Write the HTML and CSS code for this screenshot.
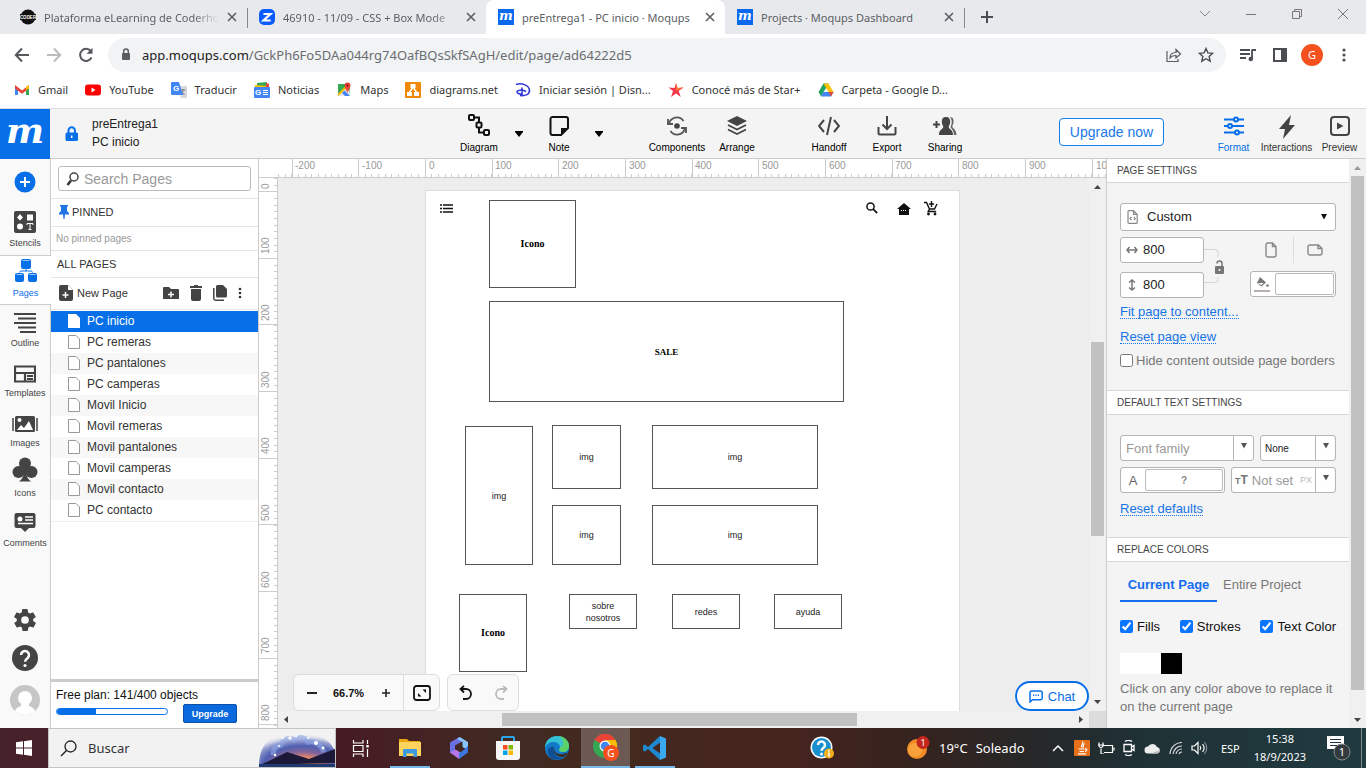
FILE: index.html
```html
<!DOCTYPE html>
<html lang="en">
<head>
<meta charset="utf-8">
<title>preEntrega1 - PC inicio · Moqups</title>
<link rel="stylesheet" href="styles.css">
</head>
<body>
<svg width="0" height="0" class="defs" aria-hidden="true">
  <symbol id="x" viewBox="0 0 10 10"><path d="M1 1l8 8M9 1l-8 8" stroke="currentColor" stroke-width="1.6" fill="none"/></symbol>
  <symbol id="sheet" viewBox="0 0 14 16"><path d="M1.500 1.500h7.500l3.500 3.500v9.500h-11z" fill="#fff" stroke="#999" stroke-width="1"/></symbol>
  <symbol id="down" viewBox="0 0 8 6"><path d="M0 0h8v1L4 6 0 1z" fill="currentColor"/></symbol>
</svg>

<nav class="tabs" aria-label="Browser tabs">
  <div class="tab">
    <svg class="i16" viewBox="0 0 16 16"><circle cx="8" cy="8" r="7.500" fill="#111"/><rect x="0" y="5" width="16" height="6" fill="#111"/><text x="8" y="9.800" font-size="4.500" font-weight="700" text-anchor="middle" fill="#fff" font-family="Liberation Sans">CODER</text></svg>
    <span class="tab-title fade">Plataforma eLearning de Coderho</span>
    <button class="tab-x" aria-label="Close"><svg width="10" height="10"><use href="#x"/></svg></button>
  </div>
  <div class="tab sep">
    <svg class="i16" viewBox="0 0 16 16"><rect width="16" height="16" rx="5" fill="#0b5cff"/><path d="M4.500 5h7l-7 6.500h7.200" fill="none" stroke="#fff" stroke-width="2.200"/></svg>
    <span class="tab-title fade">46910 - 11/09 - CSS + Box Mode</span>
    <button class="tab-x" aria-label="Close"><svg width="10" height="10"><use href="#x"/></svg></button>
  </div>
  <div class="tab active">
    <span class="fav">m</span>
    <span class="tab-title">preEntrega1 - PC inicio · Moqups</span>
    <button class="tab-x" aria-label="Close"><svg width="10" height="10"><use href="#x"/></svg></button>
  </div>
  <div class="tab">
    <span class="fav">m</span>
    <span class="tab-title">Projects · Moqups Dashboard</span>
    <button class="tab-x" aria-label="Close"><svg width="10" height="10"><use href="#x"/></svg></button>
  </div>
  <button class="new-tab sep" aria-label="New tab"><svg width="12" height="12"><path d="M6 0v12M0 6h12" stroke="#4a4d51" stroke-width="2"/></svg></button>
  <div class="win">
    <button aria-label="Search tabs"><svg width="12" height="8"><path d="M1 1l5 5 5-5" fill="none" stroke="#888"/></svg></button>
    <button aria-label="Minimize"><svg width="10" height="10"><path d="M0 5.500h10" stroke="#777"/></svg></button>
    <button aria-label="Restore"><svg width="10" height="10"><path d="M.5 2.500h7v7h-7zM2.500 2.500v-2h7v7h-2" fill="none" stroke="#777"/></svg></button>
    <button aria-label="Close window"><svg width="10" height="10"><path d="M0 0l10 10M10 0L0 10" stroke="#777"/></svg></button>
  </div>
</nav>

<div class="toolbar">
  <button class="nav-btn" aria-label="Back"><svg width="16" height="16"><path d="M8 1.500L1.800 8 8 14.500M2 8h13" fill="none" stroke="#55585c" stroke-width="2"/></svg></button>
  <button class="nav-btn" aria-label="Forward"><svg width="16" height="16"><path d="M8 1.500L14.200 8 8 14.500M14 8H1" fill="none" stroke="#bbbcbe" stroke-width="2"/></svg></button>
  <button class="nav-btn" aria-label="Reload"><svg width="16" height="16"><path d="M13.500 10.500a6 6 0 1 1-.8-6.500" fill="none" stroke="#55585c" stroke-width="2"/><path d="M14.500.8v6h-6z" fill="#55585c"/></svg></button>
  <div class="omnibox">
    <svg width="10" height="14" class="lock"><rect x="1" y="5" width="8" height="7" rx="1" fill="#5a5d61"/><path d="M2.700 5V3.300a2.300 2.300 0 0 1 4.600 0V5" fill="none" stroke="#5a5d61" stroke-width="1.500"/></svg>
    <span class="url"><b>app.moqups.com</b>/GckPh6Fo5DAa044rg74OafBQsSkfSAgH/edit/page/ad64222d5</span>
    <button aria-label="Share"><svg width="16" height="16"><path d="M1 4v10.500h11V12M4 11c0-4 2.500-5.500 6-5.500V2.500L14.500 7 10 11V8.500C7 8.500 5.500 9 4 11z" fill="none" stroke="#5a5d61" stroke-width="1.200"/></svg></button>
    <button aria-label="Bookmark"><svg width="16" height="16"><path d="M8 1.500l1.900 4.400 4.800.4-3.600 3.200 1.100 4.700L8 11.700l-4.200 2.500 1.100-4.700L1.300 6.300l4.800-.4z" fill="none" stroke="#4a4d51" stroke-width="1.400"/></svg></button>
  </div>
  <button class="tb" aria-label="Media"><svg width="16" height="16"><path d="M0 3h10M0 7h10M0 11h6M12 2.500v9M12 3h4" stroke="#4a4d51" stroke-width="1.800"/><circle cx="10.800" cy="12" r="2.300" fill="#4a4d51"/></svg></button>
  <button class="tb" aria-label="Side panel"><svg width="14" height="14"><rect x="1" y="1" width="12" height="12" fill="#fff" stroke="#4a4d51" stroke-width="2"/><path d="M8 1h5v12H8z" fill="#4a4d51"/></svg></button>
  <button class="tb" aria-label="Profile"><span class="avatar">G</span></button>
  <button class="tb" aria-label="Menu"><svg width="4" height="14"><g fill="#4a4d51"><circle cx="2" cy="2" r="1.600"/><circle cx="2" cy="7" r="1.600"/><circle cx="2" cy="12" r="1.600"/></g></svg></button>
</div>

<nav class="bookmarks" aria-label="Bookmarks">
  <a href="#"><svg class="i16" viewBox="0 0 16 16"><path d="M1 4v9h3V7z" fill="#4285f4"/><path d="M15 4v9h-3V7z" fill="#34a853"/><path d="M1 3l7 5.500L15 3v3.500l-7 5.300L1 6.500z" fill="#ea4335"/><path d="M12 5l3-2v3.500l-3 2z" fill="#fbbc04"/></svg>Gmail</a>
  <a href="#"><svg class="i16" viewBox="0 0 16 16"><rect y="2.500" width="16" height="11" rx="3" fill="#f00"/><path d="M6.500 5.500v5l4-2.500z" fill="#fff"/></svg>YouTube</a>
  <a href="#"><svg class="i16" viewBox="0 0 16 16"><path d="M7 4h8a1 1 0 0 1 1 1v10a1 1 0 0 1-1 1h-5z" fill="#d5d8dc"/><path d="M9.500 8h5M12 7v1c0 2-1 4-2 4.500M10.500 9.500l3 3.500" stroke="#777" fill="none"/><path d="M1 0h7l4 13H1a1 1 0 0 1-1-1V1a1 1 0 0 1 1-1z" fill="#4285f4"/><text x="2" y="9" font-size="8" font-weight="700" fill="#fff" font-family="Liberation Sans">G</text></svg>Traducir</a>
  <a href="#"><svg class="i16" viewBox="0 0 16 16"><path d="M3 1l10-1v6H3z" fill="#34a853"/><path d="M1 3l13 1v4H1z" fill="#fbbc04"/><path d="M12 1l3 1v4h-3z" fill="#ea4335"/><rect y="5" width="16" height="11" rx="1" fill="#4285f4"/><text x="1" y="13" font-size="8" font-weight="700" fill="#fff" font-family="Liberation Sans">G</text><path d="M9 8.500h5M9 10.500h5M9 12.500h5" stroke="#fff"/></svg>Noticias</a>
  <a href="#"><svg class="i16" viewBox="0 0 16 16"><path d="M2 2h12v12H2z" fill="#34a853"/><path d="M2 14L13 3l1 11z" fill="#e8eaed"/><path d="M2 13L13 2" stroke="#fbbc04" stroke-width="2"/><path d="M9 14l-3-3 2.500-2.500L14 14z" fill="#4285f4"/><path d="M11.500 11C11 8 8.500 6.500 8.500 3.500a3 3 0 0 1 6 0c0 3-2.500 4.500-3 7.500z" fill="#ea4335"/><circle cx="11.500" cy="3.500" r="1" fill="#7b1f16"/></svg>Maps</a>
  <a href="#"><svg class="i16" viewBox="0 0 16 16"><rect width="16" height="16" rx="1" fill="#f08705"/><path d="M8 5l-4 6M8 5l4 6" stroke="#fff" stroke-width="1.500"/><path d="M5.500 2h5v4h-5zM2 10h5v4H2zM9 10h5v4H9z" fill="#fff"/></svg>diagrams.net</a>
  <a href="#"><svg class="i16" viewBox="0 0 16 16"><path d="M1 2.500c6-2 13.500 1 13.500 6 0 4.500-5 5.500-9.500 5M7 5.500v8.500M7 12C4 12.500 2 11 2 9.800 2 8 8 7.500 11 9.500" fill="none" stroke="#3038d8" stroke-width="1.600"/></svg>Iniciar sesión | Disn...</a>
  <a href="#"><svg class="i16" viewBox="0 0 16 16"><path d="M8 1l1.500 5 6-.5-4.800 3.500 2 6L8 11.500 3 15l2-6L.5 5.500 6.500 6z" fill="#f4364c"/><path d="M8 1l1.500 5 6-.5L8 9z" fill="#fb7a2c"/></svg>Conocé más de Star+</a>
  <a href="#"><svg class="i16" viewBox="0 0 16 16"><path d="M5.500 1.500h5L8 6l-5 8.500L.5 10z" fill="#1fa463"/><path d="M5.500 1.500h5l5 8.500h-5z" fill="#ffc107"/><path d="M5.500 10h10L13 14.500H3z" fill="#4285f4"/><path d="M10.500 10h5L13 14.500z" fill="#ea4335"/></svg>Carpeta - Google D...</a>
</nav>

<header class="app-head">
  <div class="logo">m</div>
  <div class="doc">
    <svg width="14" height="16"><rect x=".5" y="6.500" width="12.500" height="8.500" rx="1.500" fill="#0770e8"/><path d="M3.500 7V4.500a3.200 3.200 0 0 1 6.400 0V7" fill="none" stroke="#0770e8" stroke-width="2"/><path d="M6.700 9.500v2.500" stroke="#fff" stroke-width="1.500"/></svg>
    <p>preEntrega1<br>PC inicio</p>
  </div>
  <div class="group">
    <button class="tool"><svg width="22" height="22" fill="none" stroke="#111" stroke-width="2"><rect x="1" y="1" width="5" height="5" rx="1"/><rect x="8.500" y="8.500" width="5" height="5" rx="1"/><rect x="16" y="16" width="5" height="5" rx="1"/><path d="M6 3.500h5v5M11 13.500v5h5"/></svg>Diagram</button>
    <button class="caret" aria-label="Diagram options"><svg width="8" height="6"><use href="#down"/></svg></button>
    <button class="tool"><svg width="20" height="20"><path d="M1.500 3a2 2 0 0 1 2-2H17a2 2 0 0 1 2 2v9l-7 7H3.500a2 2 0 0 1-2-2z" fill="none" stroke="#111" stroke-width="2"/><path d="M12 19v-7h7z" fill="#111"/></svg>Note</button>
    <button class="caret" aria-label="Note options"><svg width="8" height="6"><use href="#down"/></svg></button>
  </div>
  <div class="group">
    <button class="tool"><svg width="20" height="20" fill="none" stroke="#555" stroke-width="1.800"><path d="M2 8A8 8 0 0 1 16.500 5M18 12A8 8 0 0 1 3.500 15"/><path d="M1 3v5h5M19 17v-5h-5"/><circle cx="10" cy="10" r="2.800" fill="#444" stroke="none"/></svg>Components</button>
    <button class="tool"><svg width="20" height="20"><path d="M10 0l10 5-10 5L0 5z" fill="#444"/><path d="M1 9l9 4.500L19 9M1 13.500l9 4.500 9-4.500" fill="none" stroke="#444" stroke-width="1.800"/></svg>Arrange</button>
  </div>
  <div class="group share">
    <button class="tool"><svg width="22" height="20" fill="none" stroke="#444" stroke-width="2"><path d="M6 4L1 10l5 6M16 4l5 6-5 6M13 1L9 19"/></svg>Handoff</button>
    <button class="tool"><svg width="20" height="20" fill="none" stroke="#444" stroke-width="2"><path d="M10 0v13M5.500 8.500L10 13l4.500-4.500M1.500 11v6a1.500 1.500 0 0 0 1.500 1.500h14a1.500 1.500 0 0 0 1.500-1.500v-6"/></svg>Export</button>
    <button class="tool"><svg width="24" height="20"><path d="M3.500 5v7M0 8.500h7" stroke="#444" stroke-width="2"/><path d="M13 1c3 0 4.200 2 4.200 4.500 0 2-.8 4-1.500 5 0 3 4.300 2.500 4.300 8.500H6c0-6 4.300-5.500 4.300-8.500-.7-1-1.500-3-1.500-5C8.800 3 10 1 13 1z" fill="#444"/><path d="M17 1c3 .2 4 2.500 3.500 5.500-.3 2-1 2.500-1.200 4 .3 2.200 4 2.500 4.200 8.500H21c-.2-5-2.500-5.500-3.500-8C19 8 19.500 4 17 1z" fill="#666"/></svg>Sharing</button>
  </div>
  <button class="upgrade-now">Upgrade now</button>
  <div class="group right">
    <button class="tool blue"><svg width="20" height="20" fill="#f4f4f4" stroke="#0770e8" stroke-width="2"><path d="M0 3.500h20M0 10h20M0 16.500h20"/><circle cx="12" cy="3.500" r="2"/><circle cx="6" cy="10" r="2"/><circle cx="13" cy="16.500" r="2"/></svg>Format</button>
    <button class="tool"><svg width="16" height="24"><path d="M12 0L0 14h6L4 24l12-14h-6z" fill="#444"/></svg>Interactions</button>
    <button class="tool"><svg width="20" height="20"><rect x="1" y="1" width="18" height="18" rx="3" fill="none" stroke="#444" stroke-width="2"/><path d="M7 6.500v7l6.500-3.500z" fill="#444"/></svg>Preview</button>
  </div>
</header>

<main class="app">
  <nav class="rail" aria-label="Tools">
    <button class="add" aria-label="Add"><svg width="22" height="22"><circle cx="11" cy="11" r="10.500" fill="#0770e8"/><path d="M11 6v10M6 11h10" stroke="#fff" stroke-width="2"/></svg></button>
    <button class="rail-item"><svg width="22" height="22"><rect width="22" height="22" rx="2" fill="#444"/><path d="M6 3l3 3.500L6 9.500 3 6.500zM13 3.500h6v6h-6z" fill="#fff"/><circle cx="6" cy="15.500" r="3" fill="#fff"/><path d="M13 14v-1.500h6V14M16 12.500v6M14.500 18.500h3" stroke="#fff" fill="none"/></svg>Stencils</button>
    <button class="rail-item on"><svg width="22" height="24" fill="#0770e8"><rect x="6" y="0" width="10" height="10" rx="2"/><rect x="0" y="14" width="9" height="9" rx="2"/><rect x="13" y="14" width="9" height="9" rx="2"/><path d="M11 10v2M4.500 13.500l1-1.500h11l1 1.500" fill="none" stroke="#0770e8"/><path d="M7.500 1.500h7M1.500 15.500h6M14.500 15.500h6" stroke="#9cc8fa"/></svg>Pages</button>
    <button class="rail-item"><svg width="22" height="20"><path d="M0 1h22M4 5.500h18M0 10h22M4 14.500h18M6 19h16" stroke="#444" stroke-width="2"/></svg>Outline</button>
    <button class="rail-item"><svg width="22" height="18"><path d="M1 1.500h20v15H1zM1 8h20M11 8v9M13 11h6M13 14h6" fill="none" stroke="#444" stroke-width="2.200"/></svg>Templates</button>
    <button class="rail-item"><svg width="26" height="18"><rect x="3" y="1" width="20" height="16" rx="1.500" fill="#444"/><path d="M1 3v13M25 3v13" stroke="#444" stroke-width="1.500"/><path d="M5 15l4-5 3 3 5-7 4 9z" fill="#fff"/><circle cx="7.500" cy="5" r="2" fill="#fff"/></svg>Images</button>
    <button class="rail-item"><svg width="26" height="26" fill="#444"><circle cx="13" cy="6.500" r="6"/><circle cx="6.500" cy="15" r="6"/><circle cx="19.500" cy="15" r="6"/><path d="M10 8h6l2 8h-3.500c0 4 1.500 6 4.500 8.500H7c3-2.500 4.500-4.500 4.500-8.500H8z"/></svg>Icons</button>
    <button class="rail-item"><svg width="22" height="20"><path d="M2.500 0h17A2 2 0 0 1 21.500 2v11a2 2 0 0 1-2 2H15l-4 4-4-4H2.500a2 2 0 0 1-2-2V2a2 2 0 0 1 2-2z" fill="#444"/><circle cx="6" cy="6" r="2.500" fill="#fff"/><path d="M11 4h8M11 7h8M4 10.500h15" stroke="#fff" stroke-width="1.500"/></svg>Comments</button>
    <div class="rail-end">
      <button aria-label="Settings"><svg width="22" height="22" viewBox="2 2 20 20"><path fill="#444" d="M19.400 13a7.500 7.500 0 0 0 0-2l2.100-1.600a.5.500 0 0 0 .1-.6l-2-3.500a.5.500 0 0 0-.6-.2l-2.500 1a7.300 7.300 0 0 0-1.700-1l-.4-2.700a.5.500 0 0 0-.5-.4h-4a.5.500 0 0 0-.5.400l-.4 2.700a7.700 7.700 0 0 0-1.700 1l-2.500-1a.5.500 0 0 0-.6.200l-2 3.500a.5.500 0 0 0 .1.600L4.600 11a8 8 0 0 0 0 2l-2.100 1.600a.5.500 0 0 0-.1.600l2 3.500c.1.200.4.300.6.200l2.500-1c.5.400 1.100.7 1.700 1l.4 2.700c0 .2.200.4.500.4h4c.2 0 .5-.2.500-.4l.4-2.700a7.300 7.300 0 0 0 1.700-1l2.500 1c.2.100.5 0 .6-.2l2-3.500a.5.500 0 0 0-.1-.6zM12 15.500a3.500 3.500 0 1 1 0-7 3.500 3.500 0 0 1 0 7z"/></svg></button>
      <button aria-label="Help"><svg width="26" height="26"><circle cx="13" cy="13" r="13" fill="#444"/><path d="M9 10a4 4 0 1 1 6.500 3.200C14 14.300 13 15 13 16.800" fill="none" stroke="#fff" stroke-width="2.500"/><circle cx="13" cy="20.500" r="1.600" fill="#fff"/></svg></button>
      <button aria-label="Account"><svg width="30" height="30"><clipPath id="av"><circle cx="15" cy="15" r="15"/></clipPath><g clip-path="url(#av)"><rect width="30" height="30" fill="#c6c6c6"/><circle cx="15" cy="13" r="7" fill="#fff"/><path d="M11 17h8v4c4 1 7 4 7 9H4c0-5 3-8 7-9z" fill="#fff"/></g></svg></button>
    </div>
  </nav>

  <section class="pages">
    <div class="search-row"><label class="search"><svg width="13" height="14"><circle cx="8" cy="5" r="4" fill="none" stroke="#444" stroke-width="1.500"/><path d="M5 8.500L1.500 13" stroke="#333" stroke-width="2.500"/></svg><input type="text" placeholder="Search Pages" aria-label="Search Pages"></label></div>
    <h2 class="pin"><svg width="10" height="14"><path d="M1 0h8v1.500H8V6l2 2v1.500H6L5.500 14h-1L4 9.500H0V8l2-2V1.500H1z" fill="#1f74e6"/></svg>PINNED</h2>
    <p class="none">No pinned pages</p>
    <h2 class="all">ALL PAGES</h2>
    <div class="page-tools">
      <button class="new-page"><svg width="14" height="16"><path d="M2 0h7l5 5v9a2 2 0 0 1-2 2H2a2 2 0 0 1-2-2V2a2 2 0 0 1 2-2z" fill="#444"/><path d="M9 0v5h5" fill="#fff"/><path d="M6.500 7v6M3.500 10h6" stroke="#fff" stroke-width="1.500"/></svg>New Page</button>
      <button aria-label="New folder"><svg width="16" height="12"><path d="M1 0h5l2 2h7a1 1 0 0 1 1 1v9H0V1a1 1 0 0 1 1-1z" fill="#444"/><path d="M8 4.500v6M5 7.500h6" stroke="#fff" stroke-width="1.500"/></svg></button>
      <button aria-label="Delete"><svg width="12" height="16"><path d="M4 0h4v1h4v2H0V1h4zM1 4h10v10a2 2 0 0 1-2 2H3a2 2 0 0 1-2-2z" fill="#444"/></svg></button>
      <button aria-label="Duplicate"><svg width="14" height="16"><path d="M4.500 0H10l4 4v7a1.500 1.500 0 0 1-1.500 1.500h-8A1.500 1.500 0 0 1 3 11V1.500A1.500 1.500 0 0 1 4.500 0z" fill="#444"/><path d="M.8 3v10.500a1.700 1.700 0 0 0 1.700 1.700H11" fill="none" stroke="#444" stroke-width="1.500"/></svg></button>
      <button aria-label="More"><svg width="4" height="12" fill="#333"><circle cx="2" cy="2" r="1.300"/><circle cx="2" cy="6" r="1.300"/><circle cx="2" cy="10" r="1.300"/></svg></button>
    </div>
    <ul class="list">
      <li class="sel"><svg width="14" height="16"><path d="M1 1h8l4 4v10H1z" fill="#fff"/></svg>PC inicio</li>
      <li><svg width="14" height="16"><use href="#sheet"/></svg>PC remeras</li>
      <li><svg width="14" height="16"><use href="#sheet"/></svg>PC pantalones</li>
      <li><svg width="14" height="16"><use href="#sheet"/></svg>PC camperas</li>
      <li><svg width="14" height="16"><use href="#sheet"/></svg>Movil Inicio</li>
      <li><svg width="14" height="16"><use href="#sheet"/></svg>Movil remeras</li>
      <li><svg width="14" height="16"><use href="#sheet"/></svg>Movil pantalones</li>
      <li><svg width="14" height="16"><use href="#sheet"/></svg>Movil camperas</li>
      <li><svg width="14" height="16"><use href="#sheet"/></svg>Movil contacto</li>
      <li><svg width="14" height="16"><use href="#sheet"/></svg>PC contacto</li>
    </ul>
    <footer class="plan">
      <p>Free plan: 141/400 objects</p>
      <div class="plan-row"><div class="meter"><div style="width:35%"></div></div><button>Upgrade</button></div>
    </footer>
  </section>

  <section class="workspace">
    <div class="corner"></div>
    <div class="ruler-x"><svg width="100%" height="18" shape-rendering="crispEdges"><g stroke="#ccc" fill="none"><path d="M0 16.500h4000" stroke-width="4" stroke-dasharray="1 5.667"/><path d="M13.500 9h4000" stroke-width="18" stroke-dasharray="1 65.667"/></g><g class="num"><text x="17" y="10">-200</text><text x="84" y="10">-100</text><text x="151" y="10">0</text><text x="217" y="10">100</text><text x="284" y="10">200</text><text x="351" y="10">300</text><text x="417" y="10">400</text><text x="484" y="10">500</text><text x="551" y="10">600</text><text x="617" y="10">700</text><text x="684" y="10">800</text><text x="751" y="10">900</text><text x="818" y="10">1000</text></g></svg></div>
    <div class="ruler-y"><svg width="18" height="100%" shape-rendering="crispEdges"><g stroke="#ccc" fill="none"><path d="M16.500 0v4000" stroke-width="4" stroke-dasharray="1 5.667"/><path d="M9 13v4000" stroke-width="18" stroke-dasharray="1 65.667"/></g><g class="num"><text transform="translate(10 11)rotate(-90)">0</text><text transform="translate(10 76)rotate(-90)">100</text><text transform="translate(10 143)rotate(-90)">200</text><text transform="translate(10 210)rotate(-90)">300</text><text transform="translate(10 276)rotate(-90)">400</text><text transform="translate(10 343)rotate(-90)">500</text><text transform="translate(10 410)rotate(-90)">600</text><text transform="translate(10 476)rotate(-90)">700</text><text transform="translate(10 543)rotate(-90)">800</text></g></svg></div>
    <div class="stage">
      <div class="artboard">
        <svg class="g-list" width="13" height="9"><path d="M0 1h2M3 1h10M0 4.500h2M3 4.500h10M0 8h2M3 8h10" stroke="#111" stroke-width="1.600"/></svg>
        <svg class="g-search" width="12" height="12"><circle cx="4.500" cy="4.500" r="3.600" fill="none" stroke="#111" stroke-width="1.500"/><path d="M7.200 7.200l4 4" stroke="#111" stroke-width="1.700"/></svg>
        <svg class="g-home" width="14" height="12"><path d="M7 0l7 6h-2v6H2V6H0z" fill="#111"/><path d="M4 7.500h6" stroke="#fff" stroke-dasharray="1 1"/></svg>
        <svg class="g-cart" width="14" height="15" fill="none" stroke="#111" stroke-width="1.400"><path d="M0 1.500h2.500L5.500 8h5L13 3M5.500 8l-1.300 2.500h8M7.500 0v6M5 3h5"/><circle cx="4.500" cy="13" r=".7"/><circle cx="11" cy="13" r=".7"/></svg>
        <div class="node icon-top"><b>Icono</b></div>
        <div class="node sale"><b>SALE</b></div>
        <div class="node tall">img</div>
        <div class="node mid-a">img</div>
        <div class="node mid-b">img</div>
        <div class="node wide-a">img</div>
        <div class="node wide-b">img</div>
        <div class="node icon-foot"><b>Icono</b></div>
        <div class="node link-a">sobre<br>nosotros</div>
        <div class="node link-b">redes</div>
        <div class="node link-c">ayuda</div>
      </div>
      <div class="zoombar">
        <div class="pill">
          <button aria-label="Zoom out"><svg width="10" height="10"><path d="M0 5h10" stroke="#222" stroke-width="2"/></svg></button>
          <b>66.7%</b>
          <button aria-label="Zoom in"><svg width="8" height="8"><path d="M0 4h8M4 0v8" stroke="#222" stroke-width="1.600"/></svg></button>
          <button class="fit" aria-label="Fit"><svg width="18" height="16"><rect x="1" y="1" width="16" height="14" rx="2.500" fill="none" stroke="#111" stroke-width="1.800"/><path d="M9.500 4.500H13V8zM5 8v3.500h3.500z" fill="#111"/></svg></button>
        </div>
        <div class="pill hist">
          <button aria-label="Undo"><svg width="14" height="15" fill="none" stroke="#111" stroke-width="1.800"><path d="M5 .8L1.500 4 5 7.500M2 4h5a5 5 0 0 1 0 10H4"/></svg></button>
          <button aria-label="Redo"><svg width="14" height="15" fill="none" stroke="#bbb" stroke-width="1.800"><path d="M9 .8L12.500 4 9 7.500M12 4H7a5 5 0 0 0 0 10h3"/></svg></button>
        </div>
      </div>
      <button class="chat"><svg width="14" height="13" fill="none" stroke="#0770e8" stroke-width="1.500"><path d="M2.500 1h9a1.700 1.700 0 0 1 1.700 1.700V8A1.700 1.700 0 0 1 11.500 9.700H3.500L1 12V2.500A1.500 1.500 0 0 1 2.500 1z"/><path d="M4 5.300h7" stroke-dasharray="1.200 1.200"/></svg>Chat</button>
    </div>
    <div class="sb-y"><svg width="7" height="4"><path d="M0 4l3.500-4L7 4z" fill="#444"/></svg><i></i><svg width="7" height="4"><path d="M0 0h7L3.500 4z" fill="#444"/></svg></div>
    <div class="sb-x"><svg width="4" height="7"><path d="M4 0v7L0 3.500z" fill="#444"/></svg><i></i><svg width="4" height="7"><path d="M0 0v7l4-3.500z" fill="#444"/></svg></div>
    <div class="sb-corner"></div>
  </section>

  <aside class="side">
    <div class="props">
      <h3>PAGE SETTINGS</h3>
      <div class="sec size">
        <label class="field custom"><svg width="11" height="14" fill="none" stroke="#888" stroke-width="1.200"><path d="M1 1.700A1 1 0 0 1 2 .7h4.500l3.700 3.700v8a1 1 0 0 1-1 1H2a1 1 0 0 1-1-1zM6.500.7v3.700h3.700M4.500 7L3 8.700l1.500 1.500M6.800 7l1.500 1.700-1.500 1.500"/></svg><select aria-label="Page size"><option>Custom</option></select><svg width="6" height="6" class="dark"><path d="M0 0h6L3 5.500z" fill="#111"/></svg></label>
        <div class="dims">
          <div class="wh">
            <label class="field"><svg width="12" height="8" fill="none" stroke="#777" stroke-width="1.500"><path d="M3.500 1L1 4l2.500 3M8.500 1L11 4 8.500 7M1 4h10"/></svg><input type="text" value="800" aria-label="Width"></label>
            <label class="field"><svg width="12" height="12" fill="none" stroke="#777" stroke-width="1.500"><path d="M3 3.500L6 1l3 2.500M3 8.500L6 11l3-2.500M6 1v10"/></svg><input type="text" value="800" aria-label="Height"></label>
          </div>
          <svg class="chain" width="22" height="60"><path d="M0 12.500h11a3 3 0 0 1 3 3V20M0 45.500h11a3 3 0 0 0 3-3V40" fill="none" stroke="#d4d4d4"/><rect x="11" y="29" width="9" height="8" rx="1" fill="#777"/><path d="M13 26.500a2.500 2.500 0 0 1 5 0V29" fill="none" stroke="#777" stroke-width="1.500"/><path d="M15.500 32v2" stroke="#fff" stroke-width="1.500"/></svg>
          <div class="orient">
            <div class="orient-row"><button aria-label="Portrait"><svg width="12" height="16"><path d="M1 3a2 2 0 0 1 2-2h4.500L11 4.500V13a2 2 0 0 1-2 2H3a2 2 0 0 1-2-2zM7.500 1v3.500H11" fill="none" stroke="#888" stroke-width="1.400"/></svg></button><button aria-label="Landscape"><svg width="16" height="12"><path d="M1 3a2 2 0 0 1 2-2h8.500L15 4.500V9a2 2 0 0 1-2 2H3a2 2 0 0 1-2-2zM11 1v3.500h4" fill="none" stroke="#888" stroke-width="1.400"/></svg></button></div>
            <div class="field fill"><svg width="16" height="15"><path d="M6 0l6 5.500-4.500 4L3 6z" fill="#777"/><path d="M3.500 6h6L7.500 8z" fill="#fff"/><circle cx="13.500" cy="8.500" r="1.300" fill="#777"/><path d="M0 14h16" stroke="#b8b0b0" stroke-width="2"/></svg><button aria-label="Page color"></button></div>
          </div>
        </div>
        <p class="lnk"><a href="#">Fit page to content...</a></p>
        <p class="lnk"><a href="#">Reset page view</a></p>
        <label class="hide"><input type="checkbox">Hide content outside page borders</label>
      </div>
      <h3 class="mid">DEFAULT TEXT SETTINGS</h3>
      <div class="sec text">
        <div class="row"><div class="field font"><input type="text" placeholder="Font family" aria-label="Font family"><button aria-label="Fonts"><svg width="6" height="6"><path d="M0 0h6L3 5.500z" fill="#555"/></svg></button></div>
        <div class="field weight"><select aria-label="Weight"><option>None</option></select><button aria-label="Weights"><svg width="6" height="6"><path d="M0 0h6L3 5.500z" fill="#555"/></svg></button></div></div>
        <div class="row"><div class="field tcolor"><span>A</span><button aria-label="Text color">?</button></div>
        <div class="field fsize"><span class="tt"><small>T</small>T</span><input type="text" placeholder="Not set" aria-label="Font size"><em>PX</em><button aria-label="Sizes"><svg width="6" height="6"><path d="M0 0h6L3 5.500z" fill="#555"/></svg></button></div></div>
        <p class="lnk"><a href="#">Reset defaults</a></p>
      </div>
      <h3 class="mid">REPLACE COLORS</h3>
      <div class="sec colors">
        <div class="ctabs"><button class="cur">Current Page</button><button>Entire Project</button></div>
        <div class="checks"><label><input type="checkbox" checked>Fills</label><label><input type="checkbox" checked>Strokes</label><label><input type="checkbox" checked>Text Color</label></div>
        <div class="swatches"><button class="w" aria-label="White"></button><button class="k" aria-label="Black"></button></div>
        <p class="hint">Click on any color above to replace it on the current page</p>
      </div>
    </div>
    <div class="sb-side"><svg width="7" height="4"><path d="M0 4l3.500-4L7 4z" fill="#999"/></svg><i></i><svg width="7" height="4"><path d="M0 0h7L3.500 4z" fill="#444"/></svg></div>
  </aside>
</main>

<footer class="taskbar">
  <button class="start" aria-label="Start"><svg width="16" height="16" fill="#fff"><path d="M0 2.300l7-1v6.300H0zM8 1.200L16 0v7.600H8zM0 8.500h7v6.300l-7-1zM8 8.500h8V16l-8-1.200z"/></svg></button>
  <label class="wsearch"><svg width="17" height="17"><circle cx="10.500" cy="6.500" r="5.500" fill="none" stroke="#222" stroke-width="1.300"/><path d="M6.500 10.500L1 16" stroke="#222" stroke-width="1.500"/></svg><input type="text" placeholder="Buscar" aria-label="Buscar">
    <svg class="art" width="76" height="38" viewBox="0 0 76 38"><defs><radialGradient id="sky" cx=".58" cy=".9" r=".85"><stop offset="0" stop-color="#ff9a50"/><stop offset=".22" stop-color="#e08468"/><stop offset=".4" stop-color="#80649c"/><stop offset=".6" stop-color="#4e60b2"/><stop offset=".78" stop-color="#98a0d0"/><stop offset="1" stop-color="#f2f2f2" stop-opacity="0"/></radialGradient></defs><path d="M0 38C0 12 14 3 38 3c22 0 34 8 38 20v15z" fill="url(#sky)"/><path d="M14 26c0-6 3-9 8-10 2-6 8-8 13-5 5-4 12-3 14 2 7-2 13 3 16 10" fill="none" stroke="#8fa6e6" stroke-width="5" opacity=".6"/><g fill="#fff"><circle cx="24" cy="9" r="1"/><circle cx="31" cy="9" r="1.700"/><circle cx="49" cy="9" r="1"/><circle cx="57" cy="14" r="2"/><circle cx="64" cy="19" r="1.400"/><circle cx="20" cy="17" r="1"/><circle cx="37" cy="7" r="1.200"/><circle cx="16" cy="26" r="1.300"/></g><path d="M1 36l11-5 16-8 22 7 26-10v14z" fill="#1c1838"/><path d="M0 35h76v3H0z" fill="#1e3a70"/></svg></label>
  <button class="task" aria-label="Task view"><svg width="17" height="17" fill="none" stroke="#fff" stroke-width="1.200"><path d="M1.500 0v3h9.500V0M1.500 5.500H11v6H1.500zM1.500 17v-3H11v3M15.500 0v4M15.500 9v8"/><path d="M15.500 5v2.500" stroke-width="2.500"/></svg></button>
  <button class="task open" aria-label="Explorer"><svg width="22" height="20"><path d="M0 1h8l2 2h11v15H0z" fill="#e9a512"/><path d="M0 4h22v14H0z" fill="#ffd45e"/><path d="M4 19v-7a1 1 0 0 1 1-1h12a1 1 0 0 1 1 1v7h-3.500v-3.500h-7V19z" fill="#3c9be0"/></svg></button>
  <button class="task" aria-label="Microsoft 365"><svg width="20" height="22"><path d="M10.500 0L1 5.500v10l5 3V8.500l7.500-4.300V1.700z" fill="#6a6fe4"/><path d="M10.500 0L19 5v8l-5.500-3V5L8 2z" fill="#86c6fa"/><path d="M1 15.500l5.500-3 5 3 2.500-1.500L10 22z" fill="#b476ea"/><path d="M19 9v6.500L10 22v-6l3.500-2z" fill="#3a78e0"/></svg></button>
  <button class="task" aria-label="Store"><svg width="24" height="24"><path d="M6 5V2a1 1 0 0 1 1-1h10a1 1 0 0 1 1 1v3" fill="none" stroke="#2ba6ea" stroke-width="2"/><path d="M0 5h24v16a3 3 0 0 1-3 3H3a3 3 0 0 1-3-3z" fill="#f7f7f7"/><path d="M7 9h4.500v4.500H7z" fill="#f25022"/><path d="M12.500 9H17v4.500h-4.500z" fill="#7fba00"/><path d="M7 14.500h4.500V19H7z" fill="#00a4ef"/><path d="M12.500 14.500H17V19h-4.500z" fill="#ffb900"/></svg></button>
  <button class="task" aria-label="Edge"><svg width="24" height="24"><circle cx="12" cy="12" r="12" fill="#1279c9"/><path d="M0 12C0 5 5 0 12 0c7 0 12 4.500 12 10 0 4-3 6-6 6-2 0-4-1-4-2s1-1 1-3c0-3-3-5-7-5-4 0-7 3-8 6z" fill="#35c1d4"/><path d="M14 0c6 1 10 5 10 10 0 4-3 6-6 6-2 0-4-1-4-2 0-.8 1-1 1-3 5 0 4-8-1-11z" fill="#5bd36a"/><path d="M9 11c-2 6 3 11 9 11-5 3-13 2-15-5-1-5 3-7 6-6z" fill="#0c4f94"/><path d="M9 11c-.5 6 5 9 12 6 3-1 1 2-2 4-6 1-12-4-10-10z" fill="#3d2b25"/></svg></button>
  <button class="task open cur" aria-label="Chrome"><svg width="26" height="28"><circle cx="12" cy="12" r="12" fill="#34a853"/><path d="M12 12L1.500 6A12 12 0 0 1 22.500 6z" fill="#ea4335"/><path d="M12 6h10.500A12 12 0 0 1 12 24l5-9z" fill="#fbbc04"/><circle cx="12" cy="12" r="5.500" fill="#fff"/><circle cx="12" cy="12" r="4.300" fill="#4285f4"/><circle cx="18" cy="19" r="8" fill="#f4511e"/><text x="18" y="22.500" font-size="10" text-anchor="middle" fill="#fff" font-family="Noto Sans">G</text></svg></button>
  <button class="task open" aria-label="VS Code"><svg width="24" height="24"><path d="M17 0v24L5 13 2 15.500 0 14.500v-5l2-1 3 2.500zM17 6.500L9.500 12l7.500 5.500z" fill="#1f8ad2" fill-rule="evenodd"/><path d="M17 0l6 2.500v19L17 24z" fill="#3aa9f0"/></svg></button>
  <button class="whelp" aria-label="Help tips"><svg width="24" height="24"><circle cx="11.500" cy="11.500" r="11" fill="#fff"/><circle cx="11.500" cy="11.500" r="9.500" fill="#1a8fd0"/><path d="M8 9a3.500 3.500 0 1 1 5.500 2.800c-1.400 1-2 1.500-2 3" fill="none" stroke="#fff" stroke-width="2.500"/><circle cx="11.500" cy="18" r="1.500" fill="#fff"/><circle cx="19" cy="17.500" r="5" fill="#f2b01e"/><path d="M19 16.500v4M19 14v1.500" stroke="#fff" stroke-width="1.600"/></svg></button>
  <button class="weather"><svg width="24" height="24"><circle cx="10" cy="13" r="10" fill="#f08a24"/><circle cx="8" cy="14" r="7" fill="#f9a13a"/><circle cx="16" cy="6.500" r="6.500" fill="#c4261d"/><text x="16" y="10" font-size="9" text-anchor="middle" fill="#fff" font-family="Noto Sans">1</text></svg><span>19°C</span><span>Soleado</span></button>
  <div class="tray">
    <svg width="12" height="8" class="more"><path d="M1 7l5-5 5 5" fill="none" stroke="#fff" stroke-width="1.500"/></svg>
    <svg width="16" height="16"><rect width="16" height="16" rx="1" fill="#e8701a"/><path d="M8.500 1.500c2 2.500-2.500 3-.5 6M10.500 3.500C8.500 5 10 5.500 9 7.500M4.500 9h6M5.500 11.500h4.500M4 13.800h8M11 9c2.500-.5 2 2 0 2.500" fill="none" stroke="#fff" stroke-width="1.200"/></svg>
    <svg width="17" height="12" fill="none" stroke="#fff" stroke-width="1.200"><path d="M5 3.500h9.500v7H6M16 5.500v3M3 6.500V12h3M1 .5v3a2 2 0 0 0 4 0v-3M0 3h6"/></svg>
    <svg width="13" height="16" fill="none" stroke="#fff" stroke-width="1.300"><path d="M1 4.500h7.500v7H1zM8.500 7L11 5.500v5L8.500 9M2 1.500c2-1.200 5-1.200 7 0M2 14.500c2 1.200 5 1.200 7 0"/></svg>
    <svg width="17" height="11"><path d="M4 10.500a3.500 3.500 0 0 1 0-7A5 5 0 0 1 13 4a3.300 3.300 0 0 1 0 6.500z" fill="#eee"/><path d="M7 10.500L16 7a3 3 0 0 1-3 3.500z" fill="#bbb"/></svg>
    <svg width="14" height="14" fill="none" stroke="#ddd" stroke-width="1.200"><path d="M1 13A12 12 0 0 1 13 1.500M4 13a9 9 0 0 1 9-8M7 13a6 6 0 0 1 6-5M10 13a3 3 0 0 1 3-2"/></svg>
    <svg width="17" height="14" fill="none" stroke="#fff" stroke-width="1.200"><path d="M1 5h2.500L7 1.500v11L3.500 9H1z"/><path d="M9 5c1 1.300 1 2.700 0 4M11.500 3c2 2.500 2 5.500 0 8"/><path d="M13.500 1c3 4 3 8 0 12" stroke="#889"/></svg>
    <span class="lang">ESP</span>
    <time>15:38<br>18/9/2023</time>
    <svg width="26" height="26"><path d="M1 1h17v13h-4l-3 3v-3H1z" fill="#fff"/><path d="M4 4.500h11M4 7.500h11M4 10.500h7" stroke="#234"/><circle cx="16" cy="17" r="8" fill="#333b3e" stroke="#888"/><text x="16" y="21" font-size="11" text-anchor="middle" fill="#fff" font-family="Noto Sans">1</text></svg>
    <button class="desk" aria-label="Show desktop"></button>
  </div>
</footer>
</body>
</html>
```

FILE: styles.css
```css
* { box-sizing: border-box; }
html, body { height: 100%; margin: 0; }
body { display: flex; flex-direction: column; overflow: hidden; font-family: "Liberation Sans", Arial, sans-serif; font-size: 12px; color: #333; background: #fff; }
button { font: inherit; color: inherit; background: none; border: 0; padding: 0; margin: 0; display: flex; align-items: center; justify-content: center; }
input, select { font: inherit; color: inherit; border: 0; background: none; padding: 0; margin: 0; min-width: 0; outline: 0; appearance: none; }
p, h2, h3, ul { margin: 0; padding: 0; font-weight: 400; }
ul { list-style: none; }
svg { flex: none; display: block; }
.defs { position: absolute; }
.i16 { width: 16px; height: 16px; }

/* Browser chrome */
.tabs { display: flex; height: 34px; flex: none; background: #e8e9ed; padding-left: 8px; font: 11px "Noto Sans", sans-serif; color: #5b5e63; }
.tab { flex: 0 1 239px; display: flex; align-items: center; gap: 8px; padding: 0 10px 0 12px; min-width: 0; }
.tab.active { background: #fff; border-radius: 8px 8px 0 0; }
.tab-title { flex: 1; white-space: nowrap; overflow: hidden; }
.fade { mask-image: linear-gradient(to right, #000 85%, transparent); }
.tab-x { width: 10px; height: 10px; }
.sep { background: linear-gradient(#888, #888) 0 8px / 1px 20px no-repeat; }
.new-tab { width: 46px; }
.fav { width: 16px; height: 16px; background: #0b69ee; color: #fff; font: italic bold 13px/14px "DejaVu Serif", serif; text-align: center; }
.win { margin-left: auto; display: flex; height: 28px; }
.win button { width: 46px; }
.toolbar { display: flex; flex: none; align-items: center; height: 42px; padding: 0 6px; }
.nav-btn { width: 32px; }
.omnibox { flex: 1; display: flex; align-items: center; height: 34px; margin: 0 6px; padding: 0 4px 0 13px; border-radius: 17px; background: #f1f3f4; font: 13px "Noto Sans", sans-serif; color: #6a6d71; }
.omnibox button { width: 32px; }
.url { flex: 1; padding-left: 11px; white-space: nowrap; overflow: hidden; }
.url b { font-weight: 400; color: #222; }
.tb { width: 32px; }
.avatar { width: 22px; height: 22px; border-radius: 50%; background: #f4511e; color: #fff; font: 11px/22px "Noto Sans", sans-serif; }
.bookmarks { display: flex; flex: none; align-items: center; gap: 17px; height: 33px; padding: 0 14px 5px; border-bottom: 1px solid #dadbdd; font: 11px "Noto Sans", sans-serif; }
.bookmarks a { display: flex; align-items: center; gap: 8px; color: #333; text-decoration: none; white-space: nowrap; }

/* App header */
.app-head { display: flex; flex: none; align-items: center; height: 50px; background: #f4f4f4; border-bottom: 1px solid #ccc; font-size: 10px; color: #222; }
.logo { width: 50px; height: 50px; align-self: flex-start; background: #0770e8; color: #fff; font: italic bold 36px/42px "DejaVu Serif", serif; text-align: center; }
.doc { flex: 0 0 399px; display: flex; align-items: center; gap: 13px; padding: 0 0 2px 15px; font-size: 12px; line-height: 18px; }
.doc svg { margin-top: 2px; }
.group { display: flex; align-self: stretch; }
.group + .group { margin-left: 38px; }
.group + .share { margin-left: 33px; }
.tool { width: 60px; flex-direction: column; justify-content: flex-end; padding-bottom: 4px; line-height: 12px; color: #000; }
.tool svg { margin-bottom: 6px; }
.caret { width: 20px; color: #000; }
.share .tool { width: 58px; }
.right .tool { width: 53px; color: #333; }
.right .blue { color: #0770e8; }
.right .tool:nth-child(2) svg { margin-bottom: 3px; }
.upgrade-now { margin: 0 43px 0 auto; width: 105px; height: 28px; border: 1px solid #1080f0; border-radius: 4px; background: #fff; color: #1a78e8; font-size: 14px; margin-top: -3px; }

/* Rail */
.app { flex: 1; display: flex; min-height: 0; }
.rail { flex: 0 0 51px; display: flex; flex-direction: column; background: #f9f9f9; border-right: 1px solid #ccc; font-size: 9px; color: #444; }
.add { height: 46px; }
.rail-item { height: 50px; flex-direction: column; justify-content: flex-end; gap: 5px; padding-bottom: 7px; line-height: 10px; }
.rail-item.on { margin-right: -1px; background: #fff; border: solid #ccc; border-width: 1px 0; color: #0770e8; padding-bottom: 6px; }
.rail-end { margin-top: auto; display: flex; flex-direction: column; gap: 14px; padding-bottom: 13px; }

/* Pages panel */
.pages { flex: 0 0 208px; min-width: 0; display: flex; flex-direction: column; border-right: 1px solid #ccc; }
.search-row { padding: 7px; border-bottom: 1px solid #e4e4e4; }
.search { display: flex; align-items: center; gap: 5px; height: 25px; padding-left: 7px; border: 1px solid #bbb; border-radius: 3px; }
.search input { flex: 1; width: 0; font-size: 14px; }
::placeholder { color: #999; opacity: 1; }
.pages h2 { display: flex; align-items: center; height: 28px; padding-left: 6px; border-bottom: 1px solid #e4e4e4; font-size: 11px; }
.pages .all { height: 27px; }
.pages .pin { padding: 0 0 2px 8px; gap: 3px; }
.none { height: 24px; padding-left: 5px; border-bottom: 1px solid #e4e4e4; font-size: 10px; line-height: 24px; color: #999; }
.page-tools { display: flex; align-items: center; gap: 11px; height: 32px; padding: 0 16px 2px 8px; border-bottom: 1px solid #e4e4e4; font-size: 11px; }
.new-page { gap: 4px; margin-right: auto; }
.list { margin-top: 1px; border-bottom: 1px solid #eee; }
.list li { display: flex; align-items: center; gap: 6px; height: 21px; padding: 0 0 2px 16px; }
.list li:nth-child(odd) { background: #f7f7f7; }
.list .sel:nth-child(odd) { background: #0770e8; color: #fff; }
.plan { margin-top: auto; height: 49px; border-top: 3px solid #ccc; padding: 6px 5px 0; color: #111; }
.plan-row { display: flex; align-items: center; gap: 15px; }
.meter { width: 112px; height: 7px; border: 1px solid #0770e8; border-radius: 4px; overflow: hidden; margin-bottom: 2px; }
.meter div { height: 100%; background: #0770e8; }
.plan button { width: 54px; height: 19px; border: 1px solid #0a4fa8; border-radius: 2px; background: #0b69de; color: #fff; font-size: 9px; font-weight: 700; margin-top: 2px; }

/* Workspace */
.workspace { flex: 1; min-width: 0; display: grid; grid-template: 19px 1fr 17px / 19px 1fr 17px; background: #eee; }
.corner { background: #fff; border-bottom: 1px solid #ccc; }
.ruler-x { grid-column: 2 / 4; background: #fff; border-bottom: 1px solid #ccc; overflow: hidden; }
.ruler-y { grid-row: 2 / 4; background: #fff; border-right: 1px solid #ccc; overflow: hidden; min-height: 0; }
.ruler-y svg { height: 100%; }
.num { font-size: 10px; fill: #999; }
.stage { position: relative; overflow: hidden; background: #ededed; }
.artboard { position: absolute; left: 147px; top: 12px; width: 535px; bottom: 0; background: #fff; border: 1px solid #ddd; border-bottom: 0; font-size: 9px; line-height: 12px; color: #222; }
.artboard > * { position: absolute; }
.artboard b { font-family: "Liberation Serif", serif; font-size: 10px; color: #000; }
.artboard .sale b { font-size: 9px; }
.node { display: flex; align-items: center; justify-content: center; text-align: center; border: 1px solid #555; }
.g-list { left: 14px; top: 13px; }
.g-search { left: 440px; top: 11px; }
.g-home { left: 471px; top: 12px; }
.g-cart { left: 498px; top: 10px; }
.icon-top { left: 63px; top: 9px; width: 87px; height: 88px; }
.sale { left: 63px; top: 110px; width: 355px; height: 101px; }
.tall { left: 39px; top: 235px; width: 68px; height: 139px; }
.mid-a, .mid-b { left: 126px; width: 69px; }
.wide-a, .wide-b { left: 226px; width: 166px; }
.mid-a, .wide-a { top: 234px; height: 64px; }
.mid-b, .wide-b { top: 314px; height: 60px; }
.icon-foot { left: 33px; top: 403px; width: 68px; height: 78px; }
.link-a, .link-b, .link-c { top: 403px; width: 68px; height: 35px; }
.link-a { left: 143px; }
.link-b { left: 246px; }
.link-c { left: 348px; }
.zoombar { position: absolute; left: 15px; bottom: 0; display: flex; gap: 7px; }
.pill { display: flex; height: 37px; background: #f9f9f9; border: 1px solid #ddd; border-radius: 6px; align-items: center; font-size: 11px; color: #111; }
.pill button { width: 35px; height: 35px; }
.pill b { width: 39px; text-align: center; }
.pill .fit { width: 36px; border-left: 1px solid #ddd; }
.chat { position: absolute; right: 0; bottom: 0; width: 74px; height: 30px; gap: 5px; border: 2px solid #0770e8; border-radius: 15px; background: #fff; color: #0770e8; font-size: 13px; }
.sb-y, .sb-side { display: flex; flex-direction: column; align-items: center; background: #f0f0f0; }
.sb-y { padding: 7px 0; }
.sb-y i { width: 13px; flex: 194 0 0; background: #c1c1c1; }
.sb-y::before, .sb-y::after, .sb-x::before, .sb-x::after { content: ""; }
.sb-y svg:first-child, .sb-x svg:first-child { order: -2; }
.sb-y svg:last-child, .sb-x svg:last-child { order: 2; }
.sb-y::before { order: -1; flex: 152 0 0; }
.sb-y::after { order: 1; flex: 163 0 0; }
.sb-x { display: flex; align-items: center; padding: 0 6px; background: #f0f0f0; }
.sb-x i { height: 13px; flex: 355 0 0; background: #c1c1c1; }
.sb-x::before { order: -1; flex: 214 0 0; }
.sb-x::after { order: 1; flex: 222 0 0; }
.sb-corner { background: #dcdcdc; }

/* Properties */
.side { flex: 0 0 260px; min-width: 0; display: flex; border-left: 1px solid #ccc; background: #f4f4f4; }
.props { flex: 1 1 0; min-width: 0; overflow: hidden; font-size: 13px; }
.props h3 { height: 24px; padding-left: 10px; background: #fff; border-bottom: 1px solid #d8d8d8; font-size: 10px; line-height: 23px; color: #444; }
.props .mid { height: 25px; border-top: 1px solid #d8d8d8; }
.sec { padding: 0 13px; }
.size { padding-top: 20px; height: 207px; }
.field { display: flex; align-items: center; height: 26px; background: #fff; border: 1px solid #b5b5b5; border-radius: 3px; color: #222; }
.custom { height: 28px; padding: 0 8px 0 6px; gap: 9px; }
.custom select { flex: 1; color: #222; padding-bottom: 2px; }
.dims { display: flex; margin-top: 6px; }
.wh { width: 84px; }
.wh .field { gap: 5px; padding-left: 5px; }
.wh .field + .field { margin-top: 9px; }
.wh input { flex: 1; width: 0; padding-bottom: 2px; }
.orient { margin-left: auto; width: 86px; }
.orient-row { display: flex; height: 26px; margin: 0 0 8px; }
.orient-row button { flex: 1; }
.orient-row button + button { border-left: 1px solid #ddd; }
.fill { padding: 1px 1px 1px 3px; gap: 5px; }
.fill button { flex: 1; height: 22px; border: 1px solid #bbb; border-radius: 2px; }
.lnk { height: 25px; line-height: 17px; padding-top: 5px; }
.lnk a { color: #1473e6; text-decoration: none; border-bottom: 1px dotted #1473e6; line-height: 15px; display: inline-block; height: 15px; }
input[type=checkbox] { appearance: auto; width: 13px; height: 13px; margin: 0; accent-color: #0b75ff; }
.hide { display: flex; align-items: center; gap: 3px; margin-top: 5px; color: #777; white-space: nowrap; }
.text { padding-top: 20px; height: 122px; }
.text .lnk { padding-top: 1px; }
.row { display: flex; gap: 6px; margin-bottom: 6px; }
.row .field > button { align-self: stretch; width: 20px; border-left: 1px solid #b5b5b5; padding-bottom: 4px; }
.row .field input, .row .field select { flex: 1; width: 0; }
.font, .tcolor { flex: 1; min-width: 0; }
.font { padding-left: 5px; }
.weight { flex: 0 0 76px; padding-left: 4px; }
.weight select { font-size: 10px; }
.tcolor span { width: 24px; text-align: center; color: #666; }
.row .tcolor > button { flex: 1; align-self: center; height: 22px; margin-right: 1px; padding: 0; border: 1px solid #bbb; border-radius: 2px; font-size: 10px; font-weight: 700; color: #888; }
.fsize { flex: 0 0 105px; padding-left: 3px; }
.tt { font-size: 12px; font-weight: 700; color: #777; margin-right: 4px; }
.tt small { font-size: 9px; }
.fsize em { font-style: normal; font-size: 9px; color: #bbb; margin-right: 3px; }
.colors { padding-top: 12px; }
.ctabs { display: flex; gap: 6px; height: 28px; color: #777; }
.ctabs button { align-items: flex-start; padding-top: 3px; }
.ctabs .cur { width: 97px; border-bottom: 2px solid #146cf0; color: #146cf0; font-weight: 700; }
.checks { display: flex; justify-content: space-between; margin-top: 17px; color: #111; white-space: nowrap; }
.checks label { display: flex; align-items: center; gap: 4px; }
.swatches { display: flex; margin-top: 19px; }
.swatches .w { width: 41px; height: 21px; background: #fff; }
.swatches .k { width: 21px; height: 21px; background: #000; }
.hint { margin-top: 6px; line-height: 18px; color: #777; }
.sb-side { flex: 0 0 17px; padding: 7px 0 6px; }
.sb-side i { flex: 1; width: 13px; margin: 6px 0 28px; background: #c1c1c1; }

/* Windows taskbar */
.taskbar { flex: none; display: flex; height: 40px; background: linear-gradient(to right, #46222a 0, #471b24 25%, #402a22 37%, #44291f 46%, #45241e 58%, #33231f 68%, #26282a 76%, #1f3236 84%, #203a40 100%); color: #fff; font: 13px "Noto Sans", sans-serif; }
.start { width: 48px; }
.wsearch { width: 288px; display: flex; align-items: center; padding-left: 11px; gap: 11px; background: #f2f2f2; border: 1px solid #c4c4c4; overflow: hidden; color: #333; }
.wsearch input { flex: 1; width: 0; }
.wsearch ::placeholder { color: #333; }
.task { width: 49px; }
.task.open { background: linear-gradient(#76b9ed, #76b9ed) 50% 100% / 40px 2px no-repeat; }
.task.open.cur { background: linear-gradient(#76b9ed, #76b9ed) 50% 100% / 49px 2px no-repeat, #6d5954; }
.whelp { width: 48px; margin-left: 119px; }
.weather { margin-left: 61px; gap: 8px; }
.tray { margin-left: auto; display: flex; align-items: center; gap: 8px; font-size: 11px; }
.more { margin-right: 2px; }
.lang { margin-left: 5px; }
.tray time { text-align: center; line-height: 18px; margin: 0 12px 0 6px; }
.desk { width: 5px; height: 40px; margin-left: 1px; border-left: 1px solid #7d8a8d; }
```
